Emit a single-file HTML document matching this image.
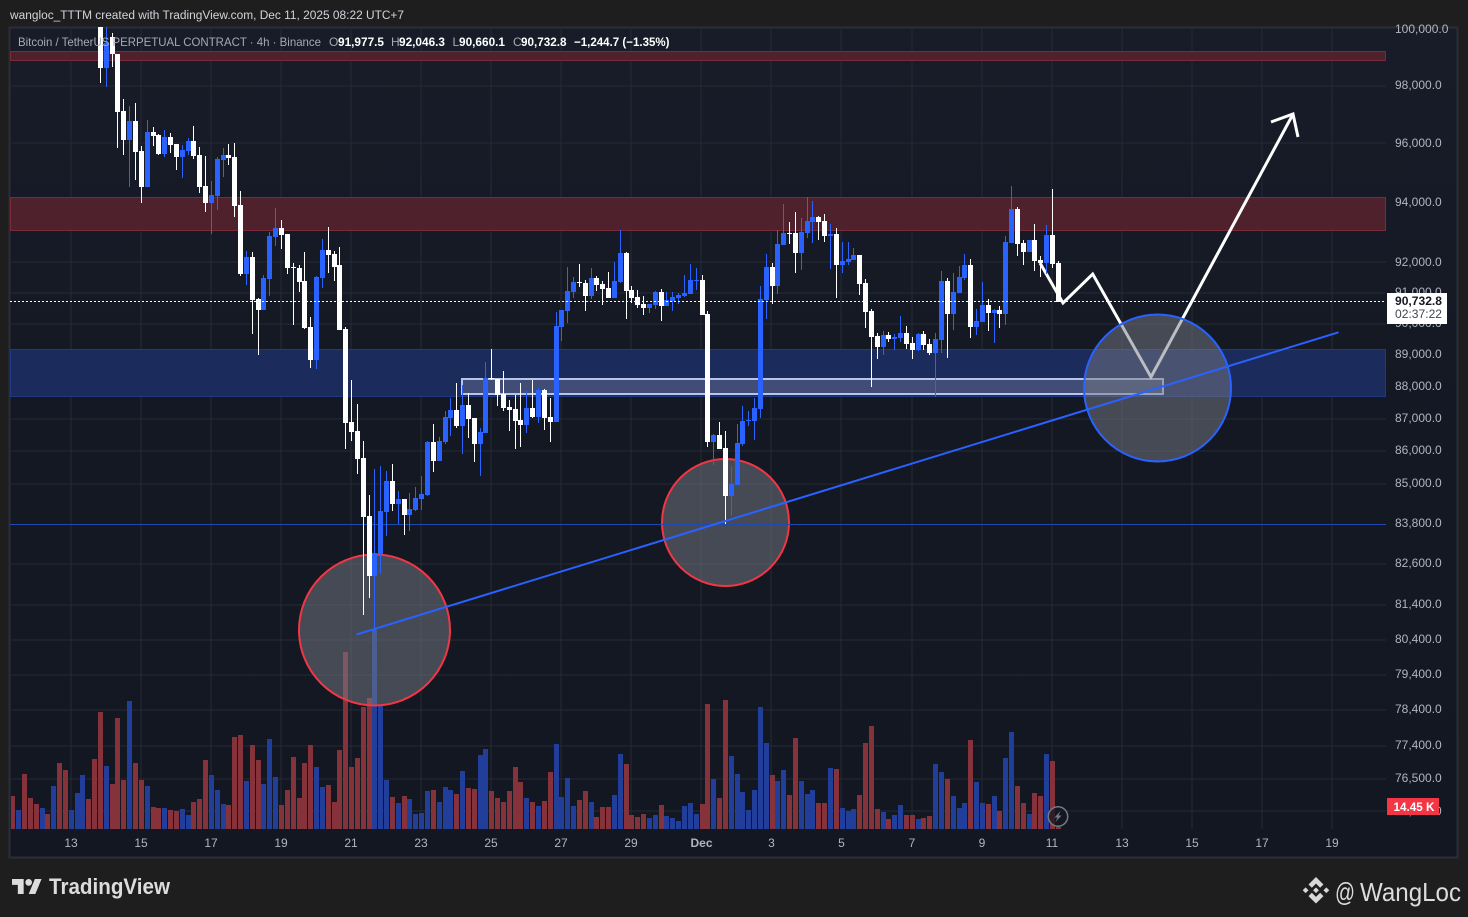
<!DOCTYPE html>
<html><head><meta charset="utf-8"><title>BTCUSDT Chart</title>
<style>
html,body{margin:0;padding:0;background:#1e1e1e;width:1468px;height:917px;overflow:hidden}
svg{display:block;font-family:"Liberation Sans",sans-serif}
</style></head><body>
<svg width="1468" height="917" viewBox="0 0 1468 917" xmlns="http://www.w3.org/2000/svg">
<defs><linearGradient id="bg" x1="0" y1="0" x2="0" y2="1"><stop offset="0" stop-color="#181c28"/><stop offset=".5" stop-color="#141823"/><stop offset="1" stop-color="#131722"/></linearGradient></defs>
<rect width="1468" height="917" fill="#1e1e1e"/>
<rect x="9.5" y="27.5" width="1448" height="830" fill="url(#bg)" stroke="#2a2e39" stroke-width="2"/>
<!-- grid -->
<g stroke="#262a36" stroke-width="1" shape-rendering="crispEdges">
<path d="M71 29V829M141 29V829M211 29V829M281 29V829M351 29V829M421 29V829M491 29V829M561 29V829M631 29V829M701 29V829M771 29V829M841 29V829M912 29V829M982 29V829M1052 29V829M1122 29V829M1192 29V829M1262 29V829M1332 29V829"/>
<path d="M11 86H1386M11 143H1386M11 202H1386M11 262H1386M11 293H1386M11 324H1386M11 355H1386M11 387H1386M11 419H1386M11 451H1386M11 484H1386M11 564H1386M11 605H1386M11 640H1386M11 675H1386M11 710H1386M11 746H1386M11 779H1386M11 811H1386"/>
</g>
<!-- zones -->
<g shape-rendering="crispEdges">
<rect x="10.5" y="51.5" width="1375" height="9" fill="#4f212c" stroke="#7a2b38"/>
<rect x="10.5" y="197.5" width="1375" height="33" fill="#4f212c" stroke="#7a2b38"/>
<rect x="10.5" y="349.5" width="1375" height="47" fill="#1a2b5c" stroke="#1f3a80"/>
<rect x="462" y="379" width="701" height="15" fill="#414d77" stroke="#b7c5e9" stroke-width="2"/>
</g>
<!-- volume -->
<path shape-rendering="crispEdges" fill="#85323a" d="M11 796h4V829h-4zM22 774h5V829h-5zM28 798h5V829h-5zM34 804h5V829h-5zM45 814h5V829h-5zM57 763h5V829h-5zM63 770h5V829h-5zM86 799h5V829h-5zM92 759h5V829h-5zM98 712h5V829h-5zM110 784h5V829h-5zM115 718h5V829h-5zM121 780h5V829h-5zM133 763h5V829h-5zM139 780h5V829h-5zM151 807h5V829h-5zM156 808h5V829h-5zM168 810h5V829h-5zM174 811h5V829h-5zM191 802h5V829h-5zM197 799h5V829h-5zM203 760h5V829h-5zM226 805h5V829h-5zM232 737h5V829h-5zM238 735h5V829h-5zM250 745h5V829h-5zM256 760h5V829h-5zM279 805h5V829h-5zM285 790h5V829h-5zM291 757h5V829h-5zM297 798h5V829h-5zM302 763h5V829h-5zM308 745h5V829h-5zM326 785h5V829h-5zM332 802h5V829h-5zM337 750h5V829h-5zM343 652h5V829h-5zM349 767h5V829h-5zM355 758h5V829h-5zM361 707h5V829h-5zM367 698h5V829h-5zM390 797h5V829h-5zM402 796h5V829h-5zM431 790h5V829h-5zM454 794h5V829h-5zM466 788h5V829h-5zM472 789h5V829h-5zM489 791h5V829h-5zM495 798h5V829h-5zM501 802h5V829h-5zM507 791h5V829h-5zM513 767h5V829h-5zM518 782h5V829h-5zM530 802h5V829h-5zM542 801h5V829h-5zM548 772h5V829h-5zM577 800h5V829h-5zM583 791h5V829h-5zM594 817h5V829h-5zM600 807h5V829h-5zM606 807h5V829h-5zM624 764h5V829h-5zM629 815h5V829h-5zM635 817h5V829h-5zM641 814h5V829h-5zM659 805h5V829h-5zM700 804h5V829h-5zM705 704h5V829h-5zM717 798h5V829h-5zM723 700h5V829h-5zM770 775h5V829h-5zM787 795h5V829h-5zM793 738h5V829h-5zM816 803h5V829h-5zM822 803h5V829h-5zM834 769h5V829h-5zM857 795h5V829h-5zM863 743h5V829h-5zM869 726h5V829h-5zM875 809h5V829h-5zM886 819h5V829h-5zM904 815h5V829h-5zM910 815h5V829h-5zM921 818h5V829h-5zM927 816h5V829h-5zM945 779h5V829h-5zM968 740h5V829h-5zM986 804h5V829h-5zM997 811h5V829h-5zM1015 786h5V829h-5zM1021 803h5V829h-5zM1032 793h5V829h-5zM1038 796h5V829h-5zM1050 761h5V829h-5zM1056 827h5V829h-5z"/>
<path shape-rendering="crispEdges" fill="#213e9a" d="M16 810h5V829h-5zM40 808h5V829h-5zM51 786h5V829h-5zM69 810h5V829h-5zM75 793h5V829h-5zM80 775h5V829h-5zM104 766h5V829h-5zM127 701h5V829h-5zM145 786h5V829h-5zM162 808h5V829h-5zM180 809h5V829h-5zM186 815h5V829h-5zM209 775h5V829h-5zM215 790h5V829h-5zM221 804h5V829h-5zM244 781h5V829h-5zM261 784h5V829h-5zM267 739h5V829h-5zM273 777h5V829h-5zM314 767h5V829h-5zM320 787h5V829h-5zM372 630h5V829h-5zM378 705h5V829h-5zM384 780h5V829h-5zM396 803h5V829h-5zM407 799h5V829h-5zM413 814h5V829h-5zM419 813h5V829h-5zM425 791h5V829h-5zM437 802h5V829h-5zM443 787h5V829h-5zM448 790h5V829h-5zM460 771h5V829h-5zM478 755h5V829h-5zM483 749h5V829h-5zM524 798h5V829h-5zM536 806h5V829h-5zM554 744h5V829h-5zM559 797h5V829h-5zM565 778h5V829h-5zM571 806h5V829h-5zM589 802h5V829h-5zM612 795h5V829h-5zM618 754h5V829h-5zM647 818h5V829h-5zM653 815h5V829h-5zM664 816h5V829h-5zM670 818h5V829h-5zM676 821h5V829h-5zM682 806h5V829h-5zM688 803h5V829h-5zM694 814h5V829h-5zM711 779h5V829h-5zM729 756h5V829h-5zM735 774h5V829h-5zM740 792h5V829h-5zM746 810h5V829h-5zM752 790h5V829h-5zM758 707h5V829h-5zM764 743h5V829h-5zM775 781h5V829h-5zM781 770h5V829h-5zM799 781h5V829h-5zM805 794h5V829h-5zM810 790h5V829h-5zM828 768h5V829h-5zM840 808h5V829h-5zM846 811h5V829h-5zM851 809h5V829h-5zM881 812h5V829h-5zM892 815h5V829h-5zM898 805h5V829h-5zM916 819h5V829h-5zM933 764h5V829h-5zM939 772h5V829h-5zM951 796h5V829h-5zM957 808h5V829h-5zM962 803h5V829h-5zM974 782h5V829h-5zM980 803h5V829h-5zM992 796h5V829h-5zM1003 758h5V829h-5zM1009 732h5V829h-5zM1027 814h5V829h-5zM1044 754h5V829h-5z"/>
<!-- forecast arrow -->
<g fill="none" stroke="#fff" stroke-width="3" stroke-linejoin="miter">
<polyline points="1040,263 1063,303 1092.7,274 1151,377 1292,116"/>
<polyline points="1271,122 1293,114 1298,137"/>
</g>
<!-- circles -->
<g>
<circle cx="374.5" cy="630" r="75.5" fill="rgb(120,123,134)" fill-opacity=".5" stroke="#f23645" stroke-width="2"/>
<circle cx="725.5" cy="522.5" r="63.5" fill="rgb(120,123,134)" fill-opacity=".5" stroke="#f23645" stroke-width="2"/>
<circle cx="1157.5" cy="388" r="73.5" fill="rgb(120,123,134)" fill-opacity=".5" stroke="#2962ff" stroke-width="2"/>
</g>
<!-- horizontal level -->
<rect x="10" y="524" width="1376" height="1" fill="#2148ad"/>
<!-- candles -->
<path shape-rendering="crispEdges" fill="#ffffff" d="M100 27h1V83h-1zM98 27h5V68h-5zM112 33h1V67h-1zM110 37h5V54h-5zM117 54h1V148h-1zM115 54h5V112h-5zM123 99h1V155h-1zM121 111h5V140h-5zM135 103h1V180h-1zM133 121h5V152h-5zM141 146h1V203h-1zM139 151h5V187h-5zM153 127h1V146h-1zM151 132h5V136h-5zM158 134h1V155h-1zM156 135h5V154h-5zM170 133h1V153h-1zM168 137h5V145h-5zM176 144h1V170h-1zM174 144h5V157h-5zM193 126h1V159h-1zM191 141h5V156h-5zM199 147h1V193h-1zM197 155h5V187h-5zM205 156h1V212h-1zM203 186h5V203h-5zM228 144h1V165h-1zM226 155h5V158h-5zM234 143h1V217h-1zM232 157h5V206h-5zM240 191h1V276h-1zM238 205h5V274h-5zM252 252h1V334h-1zM250 257h5V300h-5zM258 298h1V355h-1zM256 299h5V310h-5zM281 220h1V249h-1zM279 228h5V235h-5zM287 234h1V274h-1zM285 234h5V268h-5zM293 263h1V325h-1zM291 267h5V268h-5zM299 265h1V292h-1zM297 268h5V282h-5zM304 252h1V329h-1zM302 281h5V328h-5zM310 317h1V368h-1zM308 327h5V360h-5zM328 227h1V273h-1zM326 250h5V255h-5zM334 251h1V281h-1zM332 254h5V267h-5zM339 247h1V330h-1zM337 265h5V330h-5zM345 327h1V449h-1zM343 329h5V423h-5zM351 380h1V441h-1zM349 422h5V432h-5zM357 404h1V474h-1zM355 431h5V459h-5zM363 441h1V615h-1zM361 458h5V517h-5zM369 495h1V598h-1zM367 516h5V576h-5zM392 464h1V511h-1zM390 481h5V504h-5zM404 499h1V535h-1zM402 499h5V515h-5zM433 424h1V472h-1zM431 442h5V461h-5zM456 383h1V428h-1zM454 410h5V426h-5zM468 393h1V438h-1zM466 405h5V419h-5zM474 418h1V462h-1zM472 418h5V444h-5zM491 349h1V380h-1zM489 378h5V379h-5zM497 379h1V406h-1zM495 379h5V395h-5zM503 371h1V411h-1zM501 394h5V408h-5zM509 400h1V431h-1zM507 407h5V410h-5zM515 395h1V449h-1zM513 409h5V421h-5zM520 383h1V447h-1zM518 420h5V425h-5zM532 380h1V418h-1zM530 408h5V417h-5zM544 389h1V430h-1zM542 390h5V418h-5zM550 398h1V442h-1zM548 417h5V422h-5zM579 264h1V287h-1zM577 282h5V283h-5zM585 280h1V311h-1zM583 283h5V296h-5zM596 276h1V291h-1zM594 278h5V285h-5zM602 281h1V305h-1zM600 284h5V289h-5zM608 272h1V298h-1zM606 288h5V298h-5zM626 252h1V319h-1zM624 253h5V291h-5zM631 286h1V303h-1zM629 290h5V298h-5zM637 290h1V308h-1zM635 297h5V305h-5zM643 296h1V315h-1zM641 304h5V308h-5zM661 289h1V321h-1zM659 292h5V306h-5zM702 275h1V315h-1zM700 280h5V315h-5zM707 311h1V447h-1zM705 314h5V442h-5zM719 422h1V449h-1zM717 435h5V449h-5zM725 431h1V524h-1zM723 448h5V496h-5zM772 263h1V304h-1zM770 267h5V286h-5zM789 222h1V244h-1zM787 233h5V234h-5zM795 212h1V273h-1zM793 233h5V253h-5zM818 216h1V240h-1zM816 217h5V222h-5zM824 214h1V242h-1zM822 221h5V236h-5zM836 228h1V298h-1zM834 234h5V265h-5zM859 255h1V295h-1zM857 255h5V284h-5zM865 279h1V328h-1zM863 283h5V312h-5zM871 309h1V387h-1zM869 311h5V337h-5zM877 333h1V359h-1zM875 336h5V347h-5zM888 332h1V342h-1zM886 335h5V339h-5zM906 326h1V349h-1zM904 333h5V344h-5zM912 337h1V359h-1zM910 343h5V350h-5zM923 331h1V350h-1zM921 334h5V345h-5zM929 339h1V355h-1zM927 344h5V353h-5zM947 278h1V358h-1zM945 281h5V314h-5zM970 259h1V338h-1zM968 265h5V327h-5zM988 299h1V331h-1zM986 305h5V313h-5zM999 306h1V328h-1zM997 310h5V314h-5zM1017 207h1V256h-1zM1015 209h5V244h-5zM1023 240h1V265h-1zM1021 243h5V252h-5zM1034 224h1V271h-1zM1032 240h5V261h-5zM1040 256h1V277h-1zM1038 260h5V263h-5zM1052 189h1V268h-1zM1050 235h5V264h-5zM1058 261h1V302h-1zM1056 263h5V302h-5z"/>
<path shape-rendering="crispEdges" fill="#2962ff" d="M106 27h1V87h-1zM104 43h5V68h-5zM129 106h1V187h-1zM127 121h5V140h-5zM147 120h1V187h-1zM145 132h5V187h-5zM164 130h1V157h-1zM162 137h5V154h-5zM182 145h1V178h-1zM180 150h5V157h-5zM188 138h1V155h-1zM186 141h5V151h-5zM211 181h1V234h-1zM209 195h5V203h-5zM217 157h1V210h-1zM215 159h5V196h-5zM223 148h1V177h-1zM221 155h5V160h-5zM246 251h1V285h-1zM244 257h5V274h-5zM263 275h1V310h-1zM261 278h5V310h-5zM269 232h1V296h-1zM267 236h5V279h-5zM275 208h1V246h-1zM273 228h5V237h-5zM316 276h1V369h-1zM314 277h5V360h-5zM322 239h1V288h-1zM320 250h5V278h-5zM374 469h1V632h-1zM372 553h5V576h-5zM380 466h1V574h-1zM378 511h5V554h-5zM386 471h1V536h-1zM384 481h5V512h-5zM398 491h1V524h-1zM396 499h5V504h-5zM409 493h1V531h-1zM407 509h5V515h-5zM415 487h1V511h-1zM413 498h5V510h-5zM421 476h1V510h-1zM419 494h5V499h-5zM427 441h1V496h-1zM425 442h5V495h-5zM439 437h1V461h-1zM437 441h5V461h-5zM445 411h1V444h-1zM443 417h5V442h-5zM450 398h1V436h-1zM448 410h5V418h-5zM462 385h1V454h-1zM460 405h5V426h-5zM480 428h1V476h-1zM478 432h5V444h-5zM485 362h1V433h-1zM483 378h5V433h-5zM526 391h1V433h-1zM524 408h5V425h-5zM538 388h1V423h-1zM536 390h5V417h-5zM556 312h1V422h-1zM554 326h5V422h-5zM561 310h1V341h-1zM559 310h5V327h-5zM567 267h1V323h-1zM565 291h5V311h-5zM573 277h1V298h-1zM571 282h5V292h-5zM591 268h1V299h-1zM589 278h5V296h-5zM614 262h1V298h-1zM612 281h5V298h-5zM620 230h1V283h-1zM618 253h5V282h-5zM649 304h1V313h-1zM647 304h5V308h-5zM655 291h1V309h-1zM653 292h5V305h-5zM666 292h1V306h-1zM664 300h5V306h-5zM672 292h1V311h-1zM670 297h5V301h-5zM678 293h1V304h-1zM676 295h5V298h-5zM684 275h1V297h-1zM682 293h5V296h-5zM690 264h1V294h-1zM688 280h5V294h-5zM696 268h1V290h-1zM694 280h5V281h-5zM713 434h1V465h-1zM711 435h5V442h-5zM731 466h1V516h-1zM729 484h5V496h-5zM737 424h1V485h-1zM735 443h5V485h-5zM742 406h1V446h-1zM740 421h5V444h-5zM748 411h1V426h-1zM746 420h5V421h-5zM754 398h1V440h-1zM752 408h5V421h-5zM760 286h1V418h-1zM758 299h5V409h-5zM766 254h1V319h-1zM764 267h5V300h-5zM777 230h1V294h-1zM775 244h5V286h-5zM783 204h1V245h-1zM781 233h5V245h-5zM801 218h1V270h-1zM799 232h5V253h-5zM807 197h1V238h-1zM805 221h5V233h-5zM812 201h1V243h-1zM810 217h5V222h-5zM830 224h1V269h-1zM828 234h5V236h-5zM842 242h1V273h-1zM840 261h5V265h-5zM848 242h1V265h-1zM846 259h5V262h-5zM853 248h1V260h-1zM851 255h5V260h-5zM883 331h1V355h-1zM881 335h5V347h-5zM894 334h1V350h-1zM892 337h5V339h-5zM900 316h1V342h-1zM898 333h5V338h-5zM918 333h1V351h-1zM916 334h5V350h-5zM935 333h1V397h-1zM933 339h5V353h-5zM941 271h1V353h-1zM939 281h5V340h-5zM953 273h1V330h-1zM951 292h5V314h-5zM959 266h1V293h-1zM957 277h5V293h-5zM964 254h1V280h-1zM962 265h5V278h-5zM976 309h1V335h-1zM974 321h5V327h-5zM982 282h1V322h-1zM980 305h5V322h-5zM994 309h1V343h-1zM992 310h5V313h-5zM1005 236h1V325h-1zM1003 242h5V314h-5zM1011 186h1V243h-1zM1009 209h5V243h-5zM1029 240h1V252h-1zM1027 240h5V252h-5zM1046 225h1V274h-1zM1044 235h5V263h-5z"/>
<!-- trend line & last price line -->
<line x1="356.5" y1="634.5" x2="1338.5" y2="332.3" stroke="#2962ff" stroke-width="2"/>
<line x1="10" y1="301.5" x2="1386" y2="301.5" stroke="#fff" stroke-width="1" stroke-dasharray="2 2" shape-rendering="crispEdges"/>
<!-- flash icon -->
<circle cx="1058" cy="816.5" r="9.7" fill="#141823" fill-opacity=".75" stroke="#787b86" stroke-width="1.5"/>
<path d="M1060.5 811L1054.5 817.5H1057.5L1055.5 822L1061.5 815.5H1058.5Z" fill="#787b86"/>
<!-- header -->
<text x="10" y="19" font-size="11.5" fill="#d1d4dc" textLength="394" lengthAdjust="spacingAndGlyphs">wangloc_TTTM created with TradingView.com, Dec 11, 2025 08:22 UTC+7</text>
<!-- legend -->
<g font-size="12">
<text x="18" y="46" fill="#a6a9b2" textLength="303" lengthAdjust="spacingAndGlyphs">Bitcoin / TetherUS PERPETUAL CONTRACT · 4h · Binance</text>
<text x="329" y="46" fill="#a6a9b2">O</text><text x="338" y="46" fill="#fff" font-weight="700" textLength="46" lengthAdjust="spacingAndGlyphs">91,977.5</text>
<text x="391" y="46" fill="#a6a9b2">H</text><text x="399" y="46" fill="#fff" font-weight="700" textLength="46" lengthAdjust="spacingAndGlyphs">92,046.3</text>
<text x="452.5" y="46" fill="#a6a9b2">L</text><text x="459" y="46" fill="#fff" font-weight="700" textLength="46" lengthAdjust="spacingAndGlyphs">90,660.1</text>
<text x="513" y="46" fill="#a6a9b2">C</text><text x="521" y="46" fill="#fff" font-weight="700" textLength="45.5" lengthAdjust="spacingAndGlyphs">90,732.8</text>
<text x="574" y="46" fill="#fff" font-weight="700" textLength="95.5" lengthAdjust="spacingAndGlyphs">−1,244.7 (−1.35%)</text>
</g>
<!-- price axis -->
<g font-size="12" fill="#b2b5be">
<text x="1395" y="33">100,000.0</text>
<text x="1395" y="89">98,000.0</text>
<text x="1395" y="147">96,000.0</text>
<text x="1395" y="206">94,000.0</text>
<text x="1395" y="266">92,000.0</text>
<text x="1395" y="296">91,000.0</text>
<text x="1395" y="327">90,000.0</text>
<text x="1395" y="358">89,000.0</text>
<text x="1395" y="390">88,000.0</text>
<text x="1395" y="422">87,000.0</text>
<text x="1395" y="454">86,000.0</text>
<text x="1395" y="487">85,000.0</text>
<text x="1395" y="527">83,800.0</text>
<text x="1395" y="567">82,600.0</text>
<text x="1395" y="608">81,400.0</text>
<text x="1395" y="643">80,400.0</text>
<text x="1395" y="678">79,400.0</text>
<text x="1395" y="713">78,400.0</text>
<text x="1395" y="749">77,400.0</text>
<text x="1395" y="782">76,500.0</text>
<text x="1395" y="815">75,600.0</text>
</g>
<!-- price badge -->
<rect x="1387" y="293" width="60" height="31" fill="#fff"/>
<text x="1395" y="305" font-size="12" fill="#131722" font-weight="700" textLength="47" lengthAdjust="spacingAndGlyphs">90,732.8</text>
<text x="1395" y="318" font-size="12" fill="#434651" textLength="47" lengthAdjust="spacingAndGlyphs">02:37:22</text>
<rect x="1387" y="798" width="52" height="17" fill="#f23645"/>
<text x="1414" y="811" font-size="12" fill="#fff" font-weight="700" text-anchor="middle" textLength="41" lengthAdjust="spacingAndGlyphs">14.45 K</text>
<!-- time axis -->
<g font-size="12" fill="#b2b5be" text-anchor="middle">
<text x="71" y="847">13</text><text x="141" y="847">15</text><text x="211" y="847">17</text><text x="281" y="847">19</text><text x="351" y="847">21</text><text x="421" y="847">23</text><text x="491" y="847">25</text><text x="561" y="847">27</text><text x="631" y="847">29</text><text x="701.5" y="847" font-weight="700">Dec</text><text x="771.5" y="847">3</text><text x="841.5" y="847">5</text><text x="912" y="847">7</text><text x="982" y="847">9</text><text x="1052" y="847">11</text><text x="1122" y="847">13</text><text x="1192" y="847">15</text><text x="1262" y="847">17</text><text x="1332" y="847">19</text>
</g>
<!-- TradingView logo -->
<g transform="translate(12 875.7) scale(.833)" fill="#dcdcdc"><path d="M14 22H7V11H0V4h14v18zM28 22h-8l7.500-18h8L28 22z"/><circle cx="20" cy="8" r="4"/></g>
<text x="49" y="894" font-size="22" font-weight="700" fill="#dcdcdc" textLength="121" lengthAdjust="spacingAndGlyphs">TradingView</text>
<!-- Binance logo + handle -->
<g transform="translate(1302.700 877) scale(.83)" fill="#d8d8d8"><path d="M16 0L25 9L21 13L16 8L11 13L7 9ZM16 32L7 23L11 19L16 24L21 19L25 23ZM0 16L3.500 12.500L7 16L3.500 19.500ZM32 16L28.500 12.500L25 16L28.500 19.500ZM16 12.500L19.500 16L16 19.500L12.500 16Z"/></g>
<text x="1335" y="901" font-size="26" fill="#dcdcdc" textLength="20" lengthAdjust="spacingAndGlyphs">@</text>
<text x="1360" y="901" font-size="26" fill="#dcdcdc" textLength="101" lengthAdjust="spacingAndGlyphs">WangLoc</text>
</svg>
</body></html>
